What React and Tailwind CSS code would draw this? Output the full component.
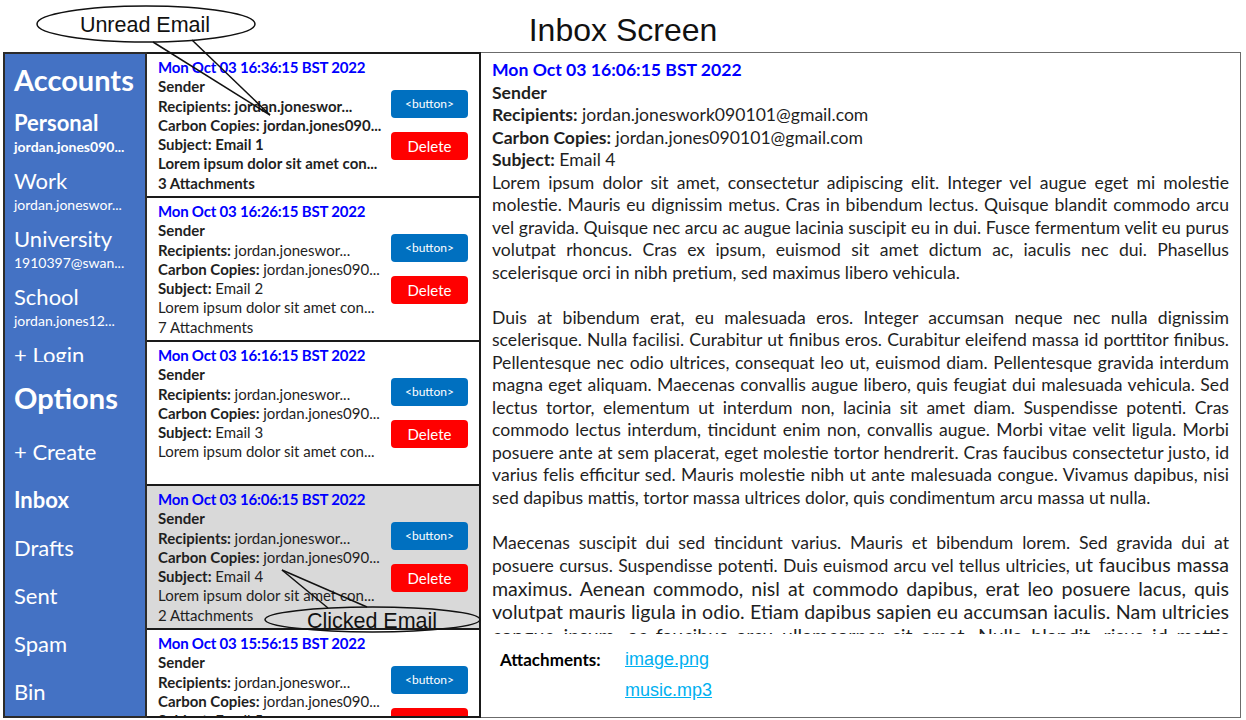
import React from "react";

const emails = [
  { date: "Mon Oct 03 16:36:15 BST 2022", subject: "Email 1", attachments: "3 Attachments", unread: true },
  { date: "Mon Oct 03 16:26:15 BST 2022", subject: "Email 2", attachments: "7 Attachments" },
  { date: "Mon Oct 03 16:16:15 BST 2022", subject: "Email 3" },
  { date: "Mon Oct 03 16:06:15 BST 2022", subject: "Email 4", attachments: "2 Attachments", selected: true },
  { date: "Mon Oct 03 15:56:15 BST 2022", subject: "Email 5" },
];

const accounts = [
  { name: "Personal", email: "jordan.jones090...", bold: true },
  { name: "Work", email: "jordan.joneswor..." },
  { name: "University", email: "1910397@swan..." },
  { name: "School", email: "jordan.jones12..." },
];

const options = [
  { name: "+ Create" },
  { name: "Inbox", active: true },
  { name: "Drafts" },
  { name: "Sent" },
  { name: "Spam" },
  { name: "Bin" },
];

function Sidebar() {
  return (
    <aside className="w-[144px] shrink-0 bg-[#4472C4] border-2 border-[#2b2b2b] text-white flex flex-col">
      {/* Accounts list, clipped like a scroll box */}
      <div className="h-[308px] overflow-hidden pl-[9px] pt-[8px]">
        <div className="text-[29px] font-bold leading-[36px]">Accounts</div>
        <div className="mt-[12px] flex flex-col gap-[10px]">
          {accounts.map((a) => (
            <div key={a.name}>
              <div className={`text-[22px] leading-[26px] ${a.bold ? "font-bold" : ""}`}>{a.name}</div>
              <div className={`text-[14px] leading-[22px] whitespace-nowrap ${a.bold ? "font-bold" : ""}`}>{a.email}</div>
            </div>
          ))}
          <div className="text-[22px] leading-[26px]">+ Login</div>
        </div>
      </div>

      <div className="pl-[9px] mt-[18px]">
        <div className="text-[29px] font-bold leading-[36px]">Options</div>
        <div className="mt-[11px]">
          {options.map((o) => (
            <div key={o.name} className={`h-[48px] text-[22px] leading-[50px] ${o.active ? "font-bold" : ""}`}>
              {o.name}
            </div>
          ))}
        </div>
      </div>
    </aside>
  );
}

function EmailCard({ email }) {
  const value = email.unread ? "font-bold" : "font-normal";
  return (
    <div
      className={`h-[144px] shrink-0 border-b-2 border-[#1a1a1a] flex items-center pl-[11px] pr-[11px] ${
        email.selected ? "bg-[#d9d9d9]" : "bg-white"
      }`}
    >
      <div className="flex-1 self-start pt-[4px] text-[15px] leading-[19.3px] text-[#1f1f1f] whitespace-nowrap">
        <div className="font-bold text-[#0000ff] tracking-[-0.2px]">{email.date}</div>
        <div className="font-bold">Sender</div>
        <div>
          <span className="font-bold">Recipients: </span>
          <span className={value}>jordan.joneswor...</span>
        </div>
        <div>
          <span className="font-bold">Carbon Copies: </span>
          <span className={value}>jordan.jones090...</span>
        </div>
        <div>
          <span className="font-bold">Subject: </span>
          <span className={value}>{email.subject}</span>
        </div>
        <div className={value}>Lorem ipsum dolor sit amet con...</div>
        {email.attachments && <div className={value}>{email.attachments}</div>}
      </div>
      <div className="w-[77px] flex flex-col gap-[14px]">
        <button className="h-[28px] rounded-[4px] bg-[#0070C0] text-white text-[12px]">&lt;button&gt;</button>
        <button className="h-[28px] rounded-[4px] bg-[#ff0000] text-white text-[15px]">Delete</button>
      </div>
    </div>
  );
}

function EmailList() {
  return (
    <section className="w-[334px] shrink-0 border-y-2 border-r-2 border-[#1a1a1a] flex flex-col overflow-hidden">
      {emails.map((e) => (
        <EmailCard key={e.date} email={e} />
      ))}
    </section>
  );
}

function Reader() {
  return (
    <main className="flex-1 border border-l-0 border-[#6b6b6b] flex flex-col">
      <div className="h-[581px] overflow-hidden px-[11px] pt-[6px] text-[17.6px] leading-[22.5px] text-[#1f1f1f]">
        <div className="font-bold text-[#0000ff]">Mon Oct 03 16:06:15 BST 2022</div>
        <div className="font-bold">Sender</div>
        <div>
          <span className="font-bold">Recipients:</span> jordan.joneswork090101@gmail.com
        </div>
        <div>
          <span className="font-bold">Carbon Copies:</span> jordan.jones090101@gmail.com
        </div>
        <div>
          <span className="font-bold">Subject:</span> Email 4
        </div>
        <div className="text-justify">
          <p className="mb-[22.5px]">
            Lorem ipsum dolor sit amet, consectetur adipiscing elit. Integer vel augue eget mi molestie molestie.
            Mauris eu dignissim metus. Cras in bibendum lectus. Quisque blandit commodo arcu vel gravida. Quisque nec
            arcu ac augue lacinia suscipit eu in dui. Fusce fermentum velit eu purus volutpat rhoncus. Cras ex ipsum,
            euismod sit amet dictum ac, iaculis nec dui. Phasellus scelerisque orci in nibh pretium, sed maximus libero
            vehicula.
          </p>
          <p className="mb-[22.5px]">
            Duis at bibendum erat, eu malesuada eros. Integer accumsan neque nec nulla dignissim scelerisque. Nulla
            facilisi. Curabitur ut finibus eros. Curabitur eleifend massa id porttitor finibus. Pellentesque nec odio
            ultrices, consequat leo ut, euismod diam. Pellentesque gravida interdum magna eget aliquam. Maecenas
            convallis augue libero, quis feugiat dui malesuada vehicula. Sed lectus tortor, elementum ut interdum non,
            lacinia sit amet diam. Suspendisse potenti. Cras commodo lectus interdum, tincidunt enim non, convallis
            augue. Morbi vitae velit ligula. Morbi posuere ante at sem placerat, eget molestie tortor hendrerit. Cras
            faucibus consectetur justo, id varius felis efficitur sed. Mauris molestie nibh ut ante malesuada congue.
            Vivamus dapibus, nisi sed dapibus mattis, tortor massa ultrices dolor, quis condimentum arcu massa ut nulla.
          </p>
          <p>
            Maecenas suscipit dui sed tincidunt varius. Mauris et bibendum lorem. Sed gravida dui at posuere cursus.
            Suspendisse potenti. Duis euismod arcu vel tellus ultricies,{" "}
            <span className="text-[19.6px] leading-[22.5px]">
              ut faucibus massa maximus. Aenean commodo, nisl at commodo dapibus, erat leo posuere lacus, quis volutpat
              mauris ligula in odio. Etiam dapibus sapien eu accumsan iaculis. Nam ultricies congue ipsum, ac faucibus
              arcu ullamcorper sit amet. Nulla blandit, risus id mattis tempus, nunc nisi porta justo, vel varius lorem
              tortor vel lectus.
            </span>
          </p>
        </div>
      </div>

      <div className="flex pl-[19px] pt-[10px]">
        <div className="w-[125px] text-[17px] font-bold leading-[31px]">Attachments:</div>
        <div className="flex flex-col font-['Liberation_Sans',Arial,sans-serif] text-[18px] leading-[31px] text-[#00B0F0] underline">
          <a href="#">image.png</a>
          <a href="#">music.mp3</a>
        </div>
      </div>
    </main>
  );
}

function Callouts() {
  return (
    <svg className="absolute inset-0 pointer-events-none" width="1246" height="720">
      <g stroke="#111" strokeWidth="1.5" fill="none">
        <line x1="153" y1="42" x2="270" y2="115" />
        <line x1="192" y1="40" x2="270" y2="115" />
        <ellipse cx="146" cy="24" rx="109" ry="18" />
        <line x1="282" y1="570" x2="328" y2="608" />
        <line x1="282" y1="570" x2="367" y2="607" />
        <ellipse cx="372.5" cy="619.5" rx="107.5" ry="12.5" />
      </g>
      <g fontFamily="'Liberation Sans', Arial, sans-serif" fontSize="21.5" fill="#111" textAnchor="middle">
        <text x="145" y="31.5">Unread Email</text>
        <text x="372" y="628">Clicked Email</text>
      </g>
    </svg>
  );
}

export default function App() {
  return (
    <div className="w-[1246px] h-[720px] bg-white relative overflow-hidden font-['Lato',sans-serif] text-black">
      <header className="h-[52px] pt-[12px] text-center text-[32px] leading-[36px] text-[#111] font-['Liberation_Sans',Arial,sans-serif]">
        Inbox Screen
      </header>
      <div className="flex h-[666px] pl-[3px] pr-[5px]">
        <Sidebar />
        <EmailList />
        <Reader />
      </div>
      <Callouts />
    </div>
  );
}
